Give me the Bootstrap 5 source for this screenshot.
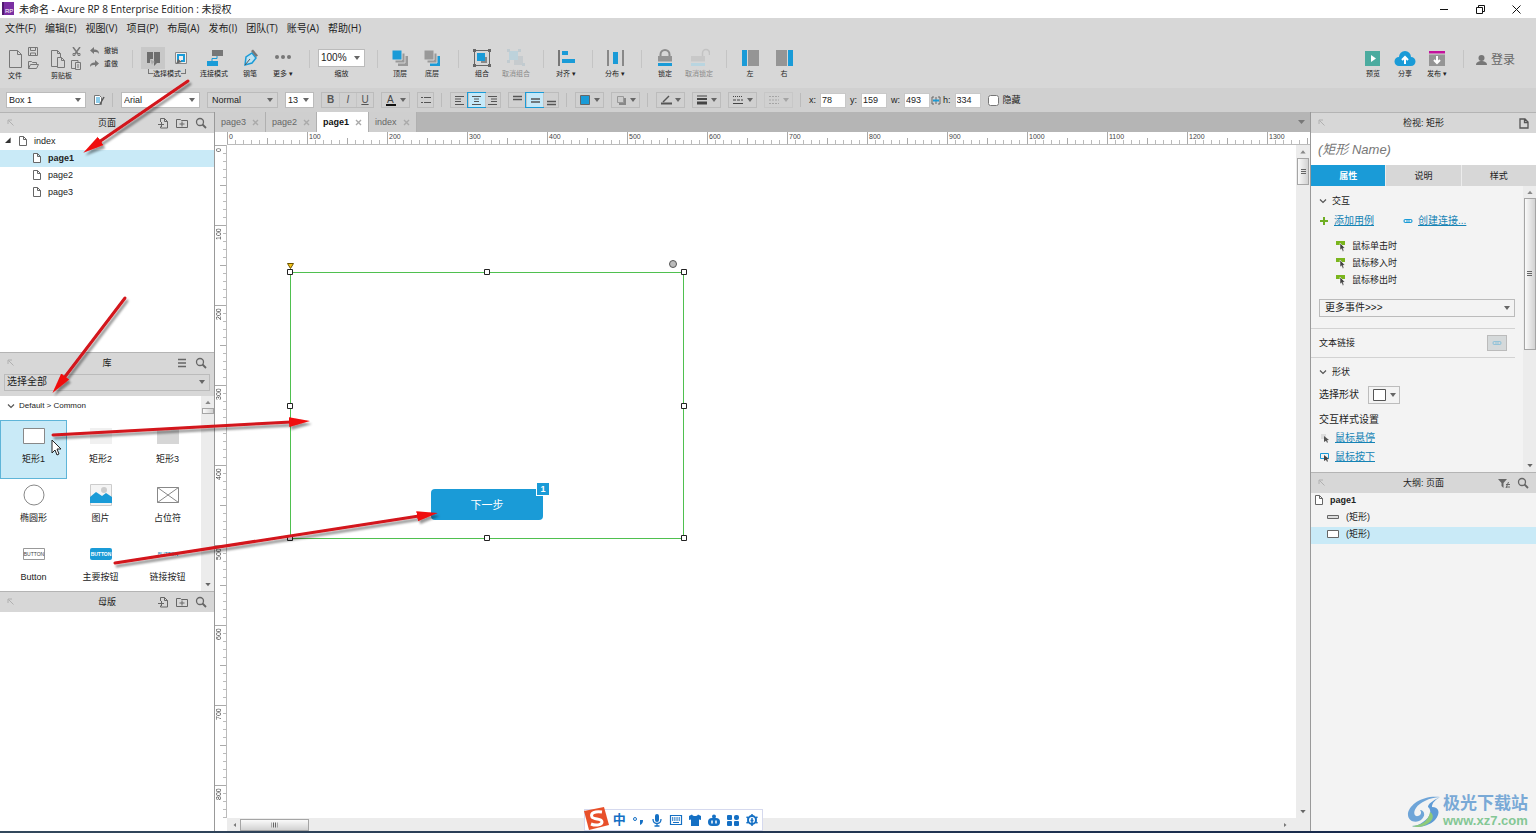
<!DOCTYPE html>
<html lang="zh-CN">
<head>
<meta charset="utf-8">
<meta name="viewport" content="width=device-width, initial-scale=1">
<title>未命名 - Axure RP 8 Enterprise Edition : 未授权</title>
<link href="https://cdn.jsdelivr.net/npm/bootstrap@5.3.0/dist/css/bootstrap.min.css" rel="stylesheet">
<style>
:root{--blue:#1a9bd7;--pale:#c9eaf7;--bar:#d7d7d7;--line:#bdbdbd;--tri:url("data:image/svg+xml,%3Csvg xmlns='http://www.w3.org/2000/svg' width='6' height='4'%3E%3Cpath d='M0 0h6L3 4z' fill='%23666'/%3E%3C/svg%3E")}
body{font-family:"Liberation Sans","Noto Sans CJK SC",sans-serif;font-size:9px;line-height:12px;color:#222;height:100vh;overflow:hidden;background:#fff}
button{background:none;border:0;padding:0;color:inherit;font:inherit}
svg{display:block;flex:none}
.titlebar{height:18px;font-family:"Open Sans","Noto Sans CJK SC",sans-serif;font-size:10px;padding-left:2px}
.winbtns{gap:27px;padding-right:15px}
.menubar{height:20px;background:var(--bar);font-family:"Open Sans","Noto Sans CJK SC",sans-serif;font-size:10px;gap:9px;padding-left:5px}
.menubar a{color:#222;text-decoration:none}
.toolbar{height:50px;background:var(--bar);padding:9px 21px 0 8px;font-size:7px;line-height:10px}
.tool{width:30px;display:flex;flex-direction:column;align-items:center;white-space:nowrap}
.tool-sm{width:28px}
.tool svg{width:22px;height:22px}
.off{color:#8a8a8a}
.tsep{width:1px;height:18px;background:#c4c4c4;margin:3px 8px 0 12px}
.filecol{width:31px}
.filecol svg{width:12px;height:12px}
.filecol svg.doc{width:16px;height:22px}
.undos{width:30px;line-height:8px;gap:5px}
.undos button{display:flex;gap:4px;white-space:nowrap}
.login{height:26px;font-size:12px;color:#666}
.modes{width:52px}
.pick{width:24px;height:22px;display:flex;align-items:center;justify-content:center}
.pick.on{background:#c8c8c8}
.brack{width:5px;height:5px;border:solid #777;border-width:0 0 1px 1px}
.brack.r{border-width:0 1px 1px 0}
.sel{appearance:none;border:1px solid #bbb;border-radius:0;background:#fff var(--tri) no-repeat right 4px center;font-size:9px;line-height:12px;padding:0 10px 0 2px;color:#222;height:16px}
.formatbar{height:24px;background:#d0d0d0;padding-left:6px;gap:7px}
.fsep{width:2px;height:14px;border-left:1px solid #bbb}
.grp{display:flex;border:1px solid #bcbcbc;height:16px}
.grp button{width:17px;display:flex;align-items:center;justify-content:center;font-size:10px;color:#555}
.grp button+button{border-left:1px solid #c4c4c4}
.grp button.on{background:#c5e9f9;outline:1px solid var(--blue)}
.drop{width:29px;height:16px;border:1px solid #bcbcbc;display:flex;align-items:center;padding-left:4px;background:var(--tri) no-repeat right 3px center}
.drop.off{opacity:.4}
.geo{gap:4px}
.geo input{width:26px;height:15px;border:1px solid #c8c8c8;padding:0 1px;font-size:9px;color:#222}
.work{flex:1 1 0;min-height:0}
.leftcol{width:215px;flex:none;display:grid;grid-template-rows:repeat(3,minmax(0,1fr));border-right:1px solid #999}
.rightcol{width:226px;flex:none;display:grid;grid-template-rows:repeat(2,minmax(0,1fr));border-left:1px solid #999;background:#f3f3f3}
.centercol{flex:1 1 0;min-width:0;display:flex;flex-direction:column}
.pane{display:flex;flex-direction:column;min-height:0;overflow:hidden}
.phead{height:21px;flex:none;display:grid;grid-template-columns:60px 1fr 60px;align-items:center;background:var(--bar);border-top:1px solid #b4b4b4;padding:0 7px}
.phead h2{font-size:9px;line-height:12px;margin:0;text-align:center;font-weight:400}
.phead div{display:flex;justify-content:flex-end;gap:7px}
.trow{height:17px;flex:none;display:flex;align-items:center;gap:6px;padding-bottom:2px}
.trow.on{background:var(--pale)}
.trow svg{width:10px;height:10px}
.vbar{width:13px;flex:none;background:#ececec;display:flex;flex-direction:column;align-items:center;color:#777}
.thumb{border:1px solid #a5a5a5;background:linear-gradient(90deg,#fafafa,#d2d2d2);display:flex;align-items:center;justify-content:center}
.grip{width:5px;height:6px;background:repeating-linear-gradient(#666 0 1px,transparent 1px 2px)}
.cells{display:grid;grid-template-columns:repeat(3,1fr);grid-auto-rows:59px}
.cell{display:flex;flex-direction:column;align-items:center;padding-top:2px;border:1px solid transparent;gap:2px}
.cell svg{width:24px;height:28px}
.cell.on{background:var(--pale);border-color:#5fb5d8}
.tabstrip{height:20px;flex:none;background:#b5b5b5;font-size:9px}
.ptab{height:20px;display:flex;align-items:center;gap:6px;padding:0 6px;background:#cfcfcf;border-right:1px solid #b0b0b0;color:#666}
.ptab.on{background:#fff;color:#111;font-weight:700}
.ptab svg{width:7px;height:7px}
.hruler{height:13px;flex:none;margin-left:12px;overflow:hidden;display:flex;font-size:7px;line-height:10px;color:#444;border-bottom:1px solid #bbb;background:repeating-linear-gradient(90deg,#aaa 0 1px,transparent 1px 80px) 0 0/100% 13px no-repeat,repeating-linear-gradient(90deg,#aaa 0 1px,transparent 1px 40px) 0 100%/100% 6px no-repeat,repeating-linear-gradient(90deg,#bbb 0 1px,transparent 1px 8px) 0 100%/100% 4px no-repeat}
.hruler span{flex:0 0 80px;padding-left:2px}
.vruler{width:12px;flex:none;overflow:hidden;display:flex;flex-direction:column;font-size:7px;line-height:8px;color:#444;border-right:1px solid #bbb;background:repeating-linear-gradient(#aaa 0 1px,transparent 1px 80px) 0 0/12px 100% no-repeat,repeating-linear-gradient(#aaa 0 1px,transparent 1px 40px) 100% 0/6px 100% no-repeat,repeating-linear-gradient(#bbb 0 1px,transparent 1px 8px) 100% 0/3px 100% no-repeat}
.vruler span{flex:0 0 80px;writing-mode:vertical-rl;transform:rotate(180deg);text-align:right;padding-bottom:3px;width:10px}
.boardrow{flex:1 1 0;min-height:0;display:flex}
.stage{flex:1 1 0;position:relative;overflow:hidden;min-width:0}
.shape{position:absolute;left:63px;top:127px;width:394px;height:267px;border:1px solid #4fc04f}
.nextbtn{position:absolute;left:204px;top:344px;width:112px;height:31px;background:var(--blue);color:#fff;border-radius:4px;font-size:11px}
.note{position:absolute;left:309px;top:337px;width:14px;height:14px;background:var(--blue);border:1px solid #fff;color:#fff;font-weight:700;text-align:center}
.marks{position:absolute;left:56px;top:114px;overflow:visible}
.hbar{height:13px;flex:none;margin-left:12px;background:#ececec;display:flex;align-items:center;padding:0 5px;color:#777}
.objname{height:32px;flex:none;background:#fff;border:0;border-radius:0;padding:0 7px;font-size:13px;font-style:italic;color:#777;width:100%}
.objname::placeholder{color:#777}
.itabs{display:grid;grid-template-columns:repeat(3,1fr);gap:1px;background:#ececec}
.itabs button{height:21px;background:var(--bar)}
.itabs button.on{background:var(--blue);color:#fff;font-weight:700}
.insp{flex:1;min-width:0;padding:6px 8px 0}
.insp .line{height:17px;display:flex;align-items:center;gap:5px}
.insp .ten,.insp a{font-size:10px}
.insp a{color:#1583b5;text-decoration:underline}
.rule{border-top:1px solid #d2d2d2;margin:0 0 0 -8px}
.linkbtn{width:20px;height:16px;border:1px solid #bbb;background:#d5d9da}
.ime{position:absolute;left:38%;bottom:2px;height:22px;background:#fff;border:1px solid #d5d9ee;padding:0 3px 0 28px;gap:5px}
.ime button svg{width:14px;height:14px}
.ime .slogo{position:absolute;left:-2px;bottom:-1px}
.wmark{position:absolute;right:8px;bottom:5px;gap:2px;font-family:"Noto Sans CJK SC",sans-serif}
.wmark b{display:block;font-size:17px;line-height:24px;color:#79a9d6;font-weight:700}
.wmark i{display:block;font:13px/14px "Liberation Sans",sans-serif;color:#84c795;font-weight:700}
.overlay{position:absolute;left:0;top:0;width:100%;height:100%;pointer-events:none}
.taskedge{height:2px;background:linear-gradient(90deg,#33485c,#14264a)}
</style>
</head>
<body class="d-flex flex-column position-relative">
<svg width="0" height="0" class="position-absolute" aria-hidden="true">
<defs>
<symbol id="page" viewBox="0 0 10 10"><path d="M1.5.5h4l3 3v6h-7zM5.5.5v3h3" fill="#fff" stroke="#666"/></symbol>
<symbol id="pin" viewBox="0 0 8 8"><path d="M1 5V1h4M1.500 1.500l5 5" fill="none" stroke="#b0b0b0"/></symbol>
<symbol id="find" viewBox="0 0 12 12"><circle cx="5" cy="5" r="3.500" fill="none" stroke="#666" stroke-width="1.300"/><path d="M7.500 7.500l3.500 3.500" stroke="#666" stroke-width="1.800"/></symbol>
<symbol id="addpage" viewBox="0 0 12 12"><path d="M3.500 5V1.500h4l3 3v6.500h-7V9.500M7.500 1.500v3h3M1 7.500h6M4.500 5v5" fill="none" stroke="#666"/></symbol>
<symbol id="addfold" viewBox="0 0 12 12"><path d="M.5 2.500h4l1 1h6v7H.5zM3.500 7h5M6 4.500v5" fill="none" stroke="#666"/></symbol>
<symbol id="xx" viewBox="0 0 7 7"><path d="M1 1l5 5M6 1L1 6" stroke="#aaa" stroke-width="1.400"/></symbol>
<symbol id="chev" viewBox="0 0 8 8"><path d="M1 2.500l3 3 3-3" fill="none" stroke="#555" stroke-width="1.200"/></symbol>
<symbol id="up" viewBox="0 0 6 8"><path d="M1 5.500h4L3 3z" fill="#888"/></symbol>
<symbol id="dn" viewBox="0 0 6 8"><path d="M1 2.500h4L3 5z" fill="#666"/></symbol>
<symbol id="case" viewBox="0 0 12 12"><path d="M1 1h9v4H1z" fill="#7ab51d"/><path d="M5 3l5 5-2 .3 1 2.700-1.300.5-1.200-2.700L5 10z" fill="#444" stroke="#fff" stroke-width=".5"/></symbol>
<symbol id="hov" viewBox="0 0 10 10"><path d="M1 1h5v5H1z" fill="#ddd"/><path d="M4 3l5 4-2 .3 1 2-1 .5-1-2L4 9z" fill="#555"/></symbol>
<symbol id="prs" viewBox="0 0 10 10"><path d="M.5 1.500h8v5h-8z" fill="none" stroke="#1a9bd7"/><path d="M4 3l5 4-2 .3 1 2-1 .5-1-2L4 9z" fill="#444"/></symbol>
<symbol id="chain" viewBox="0 0 10 8"><path d="M5 2.500H2.500a1.500 1.500 0 0 0 0 3H5M5 2.500h2.500a1.500 1.500 0 0 1 0 3H5M3 4h4" fill="none" stroke="#1a9bd7" stroke-width="1.200"/></symbol>
<symbol id="lock" viewBox="0 0 22 22"><path d="M6.500 9V7.500a4.500 4.500 0 0 1 9 0V9" fill="none" stroke="#8c8c8c" stroke-width="2"/><path d="M4 9h14v5.500H4z" fill="#949494"/><path d="M4 16h14v3H4z" fill="#1a9bd7"/></symbol>
</defs></svg>

<header>
<div class="titlebar d-flex align-items-center">
 <svg width="13" height="14" viewBox="0 0 13 14"><path d="M0 0h12v13H0z" fill="#7b2fa3"/><path d="M0 0h2v13H0z" fill="#501a70"/><text x="3" y="11" font-size="6" fill="#fff" font-family="Liberation Sans">RP</text></svg>
 <span class="ms-1">未命名 - Axure RP 8 Enterprise Edition : 未授权</span>
 <div class="winbtns d-flex ms-auto">
  <button aria-label="最小化"><svg width="9" height="9"><path d="M0 4.500h8" stroke="#111"/></svg></button>
  <button aria-label="还原"><svg width="9" height="9"><path d="M.5 2.500h6v6h-6zM2.500 2.500v-2h6v6h-2" fill="none" stroke="#111"/></svg></button>
  <button aria-label="关闭"><svg width="9" height="9"><path d="M.5.500l8 8M8.500.500l-8 8" stroke="#111"/></svg></button>
 </div>
</div>
<nav class="menubar d-flex align-items-center">
 <a href="#">文件(F)</a><a href="#">编辑(E)</a><a href="#">视图(V)</a><a href="#">项目(P)</a><a href="#">布局(A)</a><a href="#">发布(I)</a><a href="#">团队(T)</a><a href="#">账号(A)</a><a href="#">帮助(H)</a>
</nav>
<div class="toolbar d-flex align-items-start">
 <div class="filecol me-2">
  <div class="d-flex gap-1"><button aria-label="新建"><svg class="doc" viewBox="0 0 16 22"><path d="M1.500 2.500h8l4 4v13h-12zM9.500 2.500v4h4" fill="none" stroke="#777"/></svg></button>
  <div><button aria-label="保存" class="d-block"><svg viewBox="0 0 12 12"><path d="M.5 0.500h9v8h-9zM2.500.500v3h5v-3M2.500 8.500v-2.500h5v2.500" fill="none" stroke="#777"/></svg></button><button aria-label="打开" class="d-block"><svg viewBox="0 0 12 12"><path d="M.5 9.500v-7h3l1 1h4v2M.5 9.500l2-4h8l-2 4z" fill="none" stroke="#777"/></svg></button></div></div>
  文件</div>
 <div class="filecol me-2 ms-1">
  <div class="d-flex gap-1"><button aria-label="粘贴"><svg class="doc" viewBox="0 0 16 22"><path d="M6 18.500H.5v-16h6l3 3V9M6.500 2.500v3h3M6.500 9.500h4l3 3v7h-7zM10.500 9.500v3h3" fill="none" stroke="#777"/></svg></button>
  <div><button aria-label="剪切" class="d-block"><svg viewBox="0 0 12 12"><path d="M2 0l5 7M9 0L4 7" stroke="#777" stroke-width="1.500"/><path d="M2 6.500h2v2H2zM7 6.500h2v2H7z" fill="none" stroke="#777"/></svg></button><button aria-label="复制" class="d-block"><svg viewBox="0 0 12 12"><path d="M4 9.500H.500v-8H7V4M4.500 3.500h5v7h-5zM6 6h2M6 8h2" fill="none" stroke="#777"/></svg></button></div></div>
  剪贴板</div>
 <div class="undos d-flex flex-column">
  <button><svg width="10" height="8"><path d="M0 3.500L4 0v2.500c3 0 5 1 5 4.500-1-2-3-2-5-2V7z" fill="#777"/></svg>撤销</button>
  <button><svg width="10" height="8"><path d="M9 3.500L5 0v2.500C2 2.500 0 3.500 0 7c1-2 3-2 5-2V7z" fill="#777"/></svg>重做</button></div>
 <i class="tsep"></i>
 <div class="d-flex gap-1">
  <div class="modes"><div class="d-flex gap-1"><button class="pick on" aria-label="相交选择"><svg width="16" height="18"><path d="M2 3h6v7H5v4H2zM9 3h6v11h-3l-3 3z" fill="#6e6e6e"/><path d="M5 10l5 3-2 1-1 2z" fill="#aaa"/></svg></button><button class="pick" aria-label="包含选择"><svg width="14" height="16"><path d="M1.500 2.500h11v11h-11z" fill="#eee" stroke="#888"/><path d="M4 11V5h6v6H7" fill="none" stroke="#1a9bd7" stroke-width="2"/><path d="M2 14l2-5 4 3-2 .5z" fill="#666"/></svg></button></div>
   <div class="d-flex justify-content-center"><i class="brack"></i>选择模式<i class="brack r"></i></div></div>
  <button class="tool" style="width:34px"><svg viewBox="0 0 22 22"><path d="M9 3h11v6H9z" fill="#777"/><path d="M4 14h11v5H4z" fill="#1a9bd7"/><path d="M14 9v2.500H9V14" fill="none" stroke="#1a9bd7"/></svg>连接模式</button>
  <button class="tool"><svg viewBox="0 0 22 22"><path d="M6 18l1-8 6-4 4 5-4 5z" fill="#bfe2f1" stroke="#1a9bd7" stroke-width="1.500"/><path d="M12 4l2-1.500 5 6-2 1.500z" fill="#777"/><path d="M6 18l5-6" stroke="#555"/></svg>钢笔</button>
  <button class="tool tool-sm"><svg viewBox="0 0 22 22"><g fill="#777"><circle cx="5" cy="10" r="2"/><circle cx="11" cy="10" r="2"/><circle cx="17" cy="10" r="2"/></g></svg>更多 ▾</button>
 </div>
 <i class="tsep"></i>
 <div class="text-center" style="width:47px"><div style="height:22px" class="d-flex align-items-center"><select class="sel w-100" style="height:18px;font-size:10px" id="zoom" aria-label="缩放"><option>100%</option></select></div><label for="zoom" class="d-block">缩放</label></div>
 <i class="tsep"></i>
 <div class="d-flex gap-1">
  <button class="tool tool-sm"><svg viewBox="0 0 22 22"><path d="M9 9h10v10H9z" fill="#999"/><path d="M6 6h10v10H6z" fill="#999" stroke="#d7d7d7"/><path d="M3 3h10v10H3z" fill="#1a9bd7" stroke="#d7d7d7"/></svg>顶层</button>
  <button class="tool tool-sm"><svg viewBox="0 0 22 22"><path d="M9 9h10v10H9z" fill="#1a9bd7"/><path d="M6 6h10v10H6z" fill="#999" stroke="#d7d7d7"/><path d="M3 3h10v10H3z" fill="#999" stroke="#d7d7d7"/></svg>底层</button></div>
 <i class="tsep"></i>
 <div class="d-flex gap-1">
  <button class="tool"><svg viewBox="0 0 22 22"><path d="M3.500 3.500h15v15h-15z" fill="none" stroke="#666"/><path d="M2 2h3v3H2zM17 2h3v3h-3zM2 17h3v3H2zM17 17h3v3h-3z" fill="#666"/><path d="M10 10h6v6h-6z" fill="#888"/><path d="M6 6h8v8H6z" fill="#1a9bd7"/></svg>组合</button>
  <button class="tool off"><svg viewBox="0 0 22 22" opacity=".7"><path d="M9 9h9v9H9z" fill="#bfc7cb"/><path d="M4 4h9v9H4z" fill="#b3d0dd"/><path d="M2 2h3v3H2zM13 2h3v3h-3zM2 13h3v3H2zM17 16h3v3h-3z" fill="#b9c7ce"/></svg>取消组合</button></div>
 <i class="tsep"></i>
 <button class="tool tool-sm"><svg viewBox="0 0 22 22"><path d="M3 3h2v16H3z" fill="#777"/><path d="M7 4h6v4H7zM7 12h13v4H7z" fill="#1a9bd7"/></svg>对齐 ▾</button>
 <i class="tsep"></i>
 <button class="tool tool-sm"><svg viewBox="0 0 22 22"><path d="M3 3h2v16H3zM18 3h2v16h-2z" fill="#888"/><path d="M9 5h5v12H9z" fill="#1a9bd7"/></svg>分布 ▾</button>
 <i class="tsep"></i>
 <div class="d-flex gap-1"><button class="tool"><svg><use href="#lock"/></svg>锁定</button>
 <button class="tool off"><svg viewBox="0 0 22 22"><path d="M14.500 9V6a3.500 3.500 0 0 1 7 0v2" fill="none" stroke="#c3c3c3" stroke-width="1.500"/><path d="M3 9h14v5.500H3z" fill="#c8c8c8"/><path d="M3 16h14v3H3z" fill="#b9d5e0"/></svg>取消锁定</button></div>
 <i class="tsep"></i>
 <div class="d-flex gap-1"><button class="tool"><svg viewBox="0 0 22 22"><path d="M3 3h5v16H3z" fill="#1a9bd7"/><path d="M9 3h11v16H9z" fill="#959595"/></svg>左</button>
 <button class="tool"><svg viewBox="0 0 22 22"><path d="M3 3h11v16H3z" fill="#959595"/><path d="M15 3h5v16h-5z" fill="#1a9bd7"/></svg>右</button></div>
 <div class="d-flex gap-1 ms-auto">
  <button class="tool tool-sm"><svg viewBox="0 0 22 22"><path d="M3 4h15v15H3z" fill="#4bab9f"/><path d="M9 8l5 3.500L9 15z" fill="#fff"/></svg>预览</button>
  <button class="tool tool-sm"><svg viewBox="0 0 22 22"><path d="M5 19a4.500 4.500 0 0 1 0-9 6 6 0 0 1 12 0 4.500 4.500 0 0 1 0 9z" fill="#1a9bd7"/><path d="M11 17v-6M8 13l3-3 3 3" fill="none" stroke="#fff" stroke-width="2"/></svg>分享</button>
  <button class="tool tool-sm"><svg viewBox="0 0 22 22"><path d="M3 4h16v2.500H3z" fill="#c4129c"/><path d="M3 7.500h16V19H3z" fill="#959595"/><path d="M11 9v6M8 13l3 3 3-3" fill="none" stroke="#fff" stroke-width="2"/></svg>发布 ▾</button></div>
 <i class="tsep"></i>
 <button class="login d-flex align-items-center gap-1 ms-1"><svg width="11" height="12"><circle cx="5.500" cy="4" r="3" fill="#777"/><path d="M0 11c0-3 3-4 5.500-4s5.500 1 5.500 4z" fill="#777"/></svg>登录</button>
</div>
<div class="formatbar d-flex align-items-center">
 <select class="sel" style="width:80px" aria-label="样式"><option>Box 1</option></select>
 <button aria-label="编辑样式"><svg width="12" height="12"><path d="M1.500 1.500h5l2 2v7h-7z" fill="#fff" stroke="#777"/><path d="M3 4h4M3 6h4M3 8h4" stroke="#1a9bd7"/><path d="M11 3L7 10" stroke="#555" stroke-width="1.500"/></svg></button>
 <i class="fsep"></i>
 <select class="sel" style="width:79px" aria-label="字体"><option>Arial</option></select>
 <select class="sel" style="width:71px;background-color:#d4d4d4;padding-left:4px" aria-label="字形"><option>Normal</option></select>
 <select class="sel" style="width:29px" aria-label="字号"><option>13</option></select>
 <div class="grp"><button><b>B</b></button><button><i>I</i></button><button><u>U</u></button></div>
 <button class="drop" aria-label="文字颜色"><svg width="10" height="12"><text x="1" y="9" font-size="10" font-family="Liberation Sans" fill="#444">A</text><path d="M0 11h10" stroke="#111" stroke-width="2"/></svg></button>
 <div class="grp"><button style="width:15px" aria-label="项目符号"><svg width="10" height="9"><path d="M0 1.500h2M3 1.500h7M0 6.500h2M3 6.500h7" stroke="#555"/></svg></button></div>
 <i class="fsep"></i>
 <div class="grp"><button aria-label="左对齐"><svg width="10" height="11"><path d="M0 1.500h9M0 4h6M0 6.500h6M0 9.500h9" stroke="#555"/></svg></button><button class="on" aria-label="居中"><svg width="10" height="11"><path d="M0 1.500h9M2 4h5M2 6.500h5M0 9.500h9" stroke="#555"/></svg></button><button style="width:15px" aria-label="右对齐"><svg width="10" height="11"><path d="M0 1.500h9M3 4h6M3 6.500h6M0 9.500h9" stroke="#555"/></svg></button></div>
 <div class="grp"><button aria-label="顶部对齐"><svg width="9" height="11"><path d="M0 1.500h9M0 4.500h9" stroke="#555" stroke-width="1.300"/></svg></button><button class="on" aria-label="中部对齐"><svg width="9" height="11"><path d="M0 4h9M0 7h9" stroke="#555" stroke-width="1.300"/></svg></button><button style="width:15px" aria-label="底部对齐"><svg width="9" height="11"><path d="M0 6.500h9M0 9.500h9" stroke="#555" stroke-width="1.300"/></svg></button></div>
 <i class="fsep"></i>
 <button class="drop" aria-label="填充"><svg width="10" height="10"><path d="M.5.500h9v9h-9z" fill="#1a9bd7" stroke="#666"/></svg></button>
 <button class="drop" aria-label="阴影"><svg width="10" height="10"><path d="M3 3h7v7H3z" fill="#888"/><path d="M1.500 1.500h6v6h-6z" fill="#ccc" stroke="#999"/></svg></button>
 <i class="fsep"></i>
 <button class="drop" aria-label="线条颜色"><svg width="11" height="10"><path d="M2 7l6-6" stroke="#555" stroke-width="1.500"/><path d="M0 8.500h11" stroke="#555" stroke-width="2"/></svg></button>
 <button class="drop" aria-label="线宽"><svg width="11" height="10"><path d="M0 1h10" stroke="#444"/><path d="M0 4h10" stroke="#444" stroke-width="2"/><path d="M0 8h10" stroke="#444" stroke-width="3"/></svg></button>
 <button class="drop" aria-label="线型"><svg width="11" height="10"><path d="M0 1.500h10" stroke="#444" stroke-dasharray="1 1"/><path d="M0 5h10" stroke="#444" stroke-dasharray="3 1"/><path d="M0 8.500h10" stroke="#444"/></svg></button>
 <button class="drop off" aria-label="箭头样式"><svg width="11" height="10"><path d="M0 1.500h10M0 5h10M0 8.500h10" stroke="#666" stroke-dasharray="2 1"/></svg></button>
 <i class="fsep"></i>
 <div class="geo d-flex align-items-center"><label for="gx">x:</label><input id="gx" value="78"><label for="gy">y:</label><input id="gy" value="159"><label for="gw">w:</label><input id="gw" value="493"></div>
 <div class="geo d-flex align-items-center" style="margin-left:-6px"><svg width="10" height="9"><path d="M3 1H1v7h2M7 1h2v7H7M5 1v7" fill="none" stroke="#666"/><path d="M2 4.500h6" stroke="#1a9bd7" stroke-width="2"/></svg><label for="gh" style="margin-left:-2px">h:</label><input id="gh" value="334"></div>
 <div class="d-flex align-items-center"><input type="checkbox" id="hid" class="m-0 me-1" style="width:11px;height:11px"><label for="hid">隐藏</label></div>
</div>
</header>

<main class="work d-flex">
<aside class="leftcol">
 <section class="pane">
  <div class="phead"><svg width="8" height="8"><use href="#pin"/></svg><h2>页面</h2><div><button aria-label="添加页面"><svg width="12" height="12"><use href="#addpage"/></svg></button><button aria-label="添加文件夹"><svg width="12" height="12"><use href="#addfold"/></svg></button><button aria-label="搜索"><svg width="12" height="12"><use href="#find"/></svg></button></div></div>
  <div class="trow" style="padding-left:5px"><svg viewBox="0 0 10 10" style="width:7px"><path d="M0 8h8V0z" fill="#333"/></svg><svg><use href="#page"/></svg>index</div>
  <div class="trow on fw-bold" style="padding-left:32px"><svg><use href="#page"/></svg>page1</div>
  <div class="trow" style="padding-left:32px"><svg><use href="#page"/></svg>page2</div>
  <div class="trow" style="padding-left:32px"><svg><use href="#page"/></svg>page3</div>
 </section>
 <section class="pane">
  <div class="phead"><svg width="8" height="8"><use href="#pin"/></svg><h2>库</h2><div><button aria-label="选项"><svg width="12" height="12"><path d="M2 2.500h8M2 6h8M2 9.500h8" stroke="#666" stroke-width="1.300"/></svg></button><button aria-label="搜索"><svg width="12" height="12"><use href="#find"/></svg></button></div></div>
  <div style="background:var(--bar);padding:1px 4px 5px"><select class="sel d-block w-100" style="height:17px;font-size:10px;background-color:var(--bar)" aria-label="元件库"><option>选择全部</option></select></div>
  <div class="d-flex flex-fill" style="min-height:0">
   <div class="flex-fill overflow-hidden">
    <div class="d-flex align-items-center gap-1" style="height:24px;padding:0 0 4px 7px;font-size:8px"><svg width="8" height="8"><use href="#chev"/></svg>Default &gt; Common</div>
    <div class="cells">
     <div class="cell on"><svg viewBox="0 0 24 28"><path d="M1.500 5.500h21v15h-21z" fill="#fff" stroke="#888"/></svg>矩形1</div>
     <div class="cell"><svg viewBox="0 0 24 28"><path d="M1 5h22v16H1z" fill="#f0f0f0"/></svg>矩形2</div>
     <div class="cell"><svg viewBox="0 0 24 28"><path d="M1 5h22v16H1z" fill="#d6d6d6"/></svg>矩形3</div>
     <div class="cell"><svg viewBox="0 0 24 28"><circle cx="12" cy="13" r="10" fill="#fff" stroke="#888"/></svg>椭圆形</div>
     <div class="cell"><svg viewBox="0 0 24 28"><path d="M1.500 2.500h21v21h-21z" fill="#f4f4f4" stroke="#ccc"/><path d="M1 15l6-5 6 4 4-3 6 4v6H1z" fill="#1a9bd7"/><circle cx="15" cy="8" r="3" fill="#ccc"/></svg>图片</div>
     <div class="cell"><svg viewBox="0 0 24 28"><path d="M1.500 5.500h21v15h-21zL22.500 20.500M22.500 5.500l-21 15" fill="#fff" stroke="#888"/></svg>占位符</div>
     <div class="cell"><svg viewBox="0 0 24 28"><path d="M1.500 7.500h21v11h-21z" fill="#fff" stroke="#999"/><text x="12" y="15" font-size="5" text-anchor="middle" fill="#444">BUTTON</text></svg>Button</div>
     <div class="cell"><svg viewBox="0 0 24 28"><rect x="1" y="7" width="22" height="12" rx="2" fill="#1a9bd7"/><text x="12" y="15" font-size="5" font-weight="700" text-anchor="middle" fill="#fff">BUTTON</text></svg>主要按钮</div>
     <div class="cell"><svg viewBox="0 0 24 28"><text x="12" y="15" font-size="5" text-anchor="middle" fill="#1583b5">BUTTON</text></svg>链接按钮</div>
    </div>
   </div>
   <div class="vbar"><svg width="8" height="12"><use href="#up"/></svg><div class="thumb" style="width:12px;height:6px"></div><svg width="8" height="12" class="mt-auto"><use href="#dn"/></svg></div>
  </div>
 </section>
 <section class="pane">
  <div class="phead"><svg width="8" height="8"><use href="#pin"/></svg><h2>母版</h2><div><button aria-label="添加母版"><svg width="12" height="12"><use href="#addpage"/></svg></button><button aria-label="添加文件夹"><svg width="12" height="12"><use href="#addfold"/></svg></button><button aria-label="搜索"><svg width="12" height="12"><use href="#find"/></svg></button></div></div>
 </section>
</aside>

<section class="centercol">
 <div class="tabstrip d-flex align-items-center">
  <button class="ptab">page3<svg><use href="#xx"/></svg></button><button class="ptab">page2<svg><use href="#xx"/></svg></button><button class="ptab on">page1<svg><use href="#xx"/></svg></button><button class="ptab">index<svg><use href="#xx"/></svg></button>
  <svg width="8" height="8" class="ms-auto me-1"><path d="M0 2h7L3.500 6z" fill="#777"/></svg>
 </div>
 <div class="hruler"><span>0</span><span>100</span><span>200</span><span>300</span><span>400</span><span>500</span><span>600</span><span>700</span><span>800</span><span>900</span><span>1000</span><span>1100</span><span>1200</span><span>1300</span></div>
 <div class="boardrow">
  <div class="vruler"><span>0</span><span>100</span><span>200</span><span>300</span><span>400</span><span>500</span><span>600</span><span>700</span><span>800</span></div>
  <div class="stage">
   <div class="shape"></div>
   <button class="nextbtn">下一步</button>
   <span class="note">1</span>
   <svg class="marks" width="410" height="290"><g fill="#fff" stroke="#222"><path d="M4.500 10.500h5v5h-5zM201.500 10.500h5v5h-5zM398.500 10.500h5v5h-5zM4.500 144.500h5v5h-5zM398.500 144.500h5v5h-5zM4.500 276.500h5v5h-5zM201.500 276.500h5v5h-5zM398.500 276.500h5v5h-5z"/></g><path d="M4.500 4.500h6l-3 5z" fill="#f5c518" stroke="#6b5200"/><circle cx="390" cy="5" r="3.500" fill="#bbb" stroke="#555"/></svg>
  </div>
  <div class="vbar" style="width:14px"><svg width="8" height="13"><use href="#up"/></svg><div class="thumb" style="width:12px;height:27px"><i class="grip"></i></div><svg width="8" height="12" class="mt-auto"><use href="#dn"/></svg></div>
 </div>
 <div class="hbar"><svg width="8" height="8"><path d="M4 2v4L1.500 4z" fill="#777"/></svg><div class="thumb" style="width:69px;height:12px;background:linear-gradient(#fafafa,#d2d2d2)"><i class="grip" style="transform:rotate(90deg)"></i></div><svg width="8" height="8" class="ms-auto me-3"><path d="M3 2v4l2.500-2z" fill="#777"/></svg></div>
</section>

<aside class="rightcol">
 <section class="pane">
  <div class="phead"><svg width="8" height="8"><use href="#pin"/></svg><h2>检视: 矩形</h2><div><svg width="10" height="11" viewBox="0 0 10 11"><path d="M1 1h5l3 3v6H1zM5.500 1v3.500H9" fill="none" stroke="#555" stroke-width="1.300"/></svg></div></div>
  <input class="objname" placeholder="(矩形 Name)" aria-label="名称">
  <div class="itabs"><button class="on">属性</button><button>说明</button><button>样式</button></div>
  <div class="d-flex flex-fill" style="min-height:0">
   <div class="insp">
    <div class="line"><svg width="8" height="8"><use href="#chev"/></svg>交互</div>
    <div class="line" style="height:24px"><svg width="10" height="10"><path d="M5 1v8M1 5h8" stroke="#6fae23" stroke-width="2"/></svg><a href="#">添加用例</a><svg width="10" height="8" style="margin-left:24px"><use href="#chain"/></svg><a href="#">创建连接...</a></div>
    <div class="line ps-3 mt-1"><svg width="12" height="12"><use href="#case"/></svg>鼠标单击时</div>
    <div class="line ps-3"><svg width="12" height="12"><use href="#case"/></svg>鼠标移入时</div>
    <div class="line ps-3"><svg width="12" height="12"><use href="#case"/></svg>鼠标移出时</div>
    <select class="sel d-block ten" style="width:196px;height:18px;margin:11px 0;padding-left:5px;background-color:#f3f3f3" aria-label="更多事件"><option>更多事件&gt;&gt;&gt;</option></select>
    <div class="rule"></div>
    <div class="line justify-content-between pe-2" style="height:28px">文本链接<button class="linkbtn d-flex align-items-center justify-content-center" aria-label="文本链接"><svg width="10" height="8" opacity=".35"><use href="#chain"/></svg></button></div>
    <div class="rule"></div>
    <div class="line" style="height:27px"><svg width="8" height="8"><use href="#chev"/></svg>形状</div>
    <div class="line ten" style="height:20px;gap:9px">选择形状<button class="drop" style="width:32px;height:18px" aria-label="选择形状"><svg width="13" height="12"><path d="M.5.500h12v11h-12z" fill="#fff" stroke="#555"/></svg></button></div>
    <div class="line ten" style="height:24px;padding-top:6px">交互样式设置</div>
    <div class="line" style="height:18px;margin-left:1px"><svg width="10" height="10"><use href="#hov"/></svg><a href="#">鼠标悬停</a></div>
    <div class="line" style="height:20px;margin-left:1px"><svg width="10" height="10"><use href="#prs"/></svg><a href="#">鼠标按下</a></div>
   </div>
   <div class="vbar"><svg width="8" height="12"><use href="#up"/></svg><div class="thumb" style="width:12px;height:152px"><i class="grip"></i></div><svg width="8" height="12" class="mt-auto"><use href="#dn"/></svg></div>
  </div>
 </section>
 <section class="pane">
  <div class="phead"><svg width="8" height="8"><use href="#pin"/></svg><h2>大纲: 页面</h2><div><svg width="12" height="12"><path d="M0 2h9L5.500 6v5L3.500 9V6z" fill="#666"/><path d="M8 7.500h4M8 10h4M10.500 5L8 11" stroke="#666"/></svg><svg width="12" height="12"><use href="#find"/></svg></div></div>
  <div class="trow fw-bold" style="padding-left:3px"><svg><use href="#page"/></svg>page1</div>
  <div class="trow" style="padding-left:15px"><svg viewBox="0 0 14 10" style="width:14px"><path d="M1.500 3.500h11v3h-11z" fill="#ddd" stroke="#666"/></svg>(矩形)</div>
  <div class="trow on" style="padding-left:15px"><svg viewBox="0 0 14 10" style="width:14px"><path d="M1.500 1.500h11v7h-11z" fill="#fff" stroke="#666"/></svg>(矩形)</div>
 </section>
</aside>
</main>
<div class="taskedge"></div>

<div class="ime d-flex align-items-center">
 <svg class="slogo" width="27" height="25" viewBox="0 0 27 25"><path d="M1 5l20-4 5 18-20 5z" fill="#e8502a"/><path d="M19 6C12 5 7 7 9 11c2 3 10 1 10 5 0 3-6 4-11 2" fill="none" stroke="#fff" stroke-width="3"/></svg>
 <button style="color:#1570c4;font-weight:700;font-size:13px">中</button>
 <button aria-label="标点"><svg viewBox="0 0 14 14"><circle cx="4" cy="6" r="1.500" fill="none" stroke="#1570c4"/><path d="M9 7h3c0 3-1 4-3 5z" fill="#1570c4"/></svg></button>
 <button aria-label="语音"><svg viewBox="0 0 14 14"><rect x="5" y="1" width="4" height="8" rx="2" fill="#1570c4"/><path d="M3 6c0 6 8 6 8 0M7 10v3M4.500 13h5" fill="none" stroke="#1570c4" stroke-width="1.300"/></svg></button>
 <button aria-label="键盘"><svg viewBox="0 0 14 14"><path d="M1.500 2.500h11v9h-11z" fill="none" stroke="#1570c4" stroke-width="1.200"/><path d="M3 5h8M3 7h8" stroke="#1570c4" stroke-width="1.300" stroke-dasharray="1.300 .9"/><path d="M4 9.500h6" stroke="#1570c4"/></svg></button>
 <button aria-label="皮肤"><svg viewBox="0 0 14 14"><path d="M1 3l3-1.500c1 2 5 2 6 0L13 3v4l-2-.5V13H3V6.500L1 7z" fill="#1570c4"/></svg></button>
 <button aria-label="助手"><svg viewBox="0 0 14 14"><rect x="1" y="5" width="12" height="8" rx="4" fill="#1570c4"/><circle cx="7" cy="3.500" r="2" fill="#1570c4"/><path d="M5 7.500v3M9 7.500v3" stroke="#fff" stroke-width="1.500"/></svg></button>
 <button aria-label="工具箱"><svg viewBox="0 0 14 14"><g fill="#1570c4"><rect x="1" y="2" width="5" height="5" rx="1"/><rect x="8" y="2" width="5" height="5" rx="2"/><rect x="1" y="8" width="5" height="5" rx="1"/><rect x="8" y="8" width="5" height="5" rx="1"/></g></svg></button>
 <button aria-label="设置"><svg viewBox="0 0 14 14"><circle cx="7" cy="7" r="4" fill="none" stroke="#1570c4" stroke-width="2"/><path d="M7 1v2M7 11v2M1.500 4l2 1M10.500 9l2 1M1.500 10l2-1M10.500 5l2-1M7 5v5M5.500 7.500h3" stroke="#1570c4" stroke-width="1.500"/></svg></button>
</div>
<div class="wmark d-flex align-items-end">
 <svg width="34" height="32" viewBox="0 0 34 32"><path d="M33 1C16-1 3 8 1 17c-1 9 9 11 14 6 4-4 2-9-2-9 2 2 1 6-2 6-4 1-5-4-2-8C13 6 22 2 33 1z" fill="#6fa5d8"/><path d="M33 1C25 5 21 8 21 11c4 3 3 10-5 15-4 3-8 4-11 4 5 2 16 1 23-6 6-7 4-13-3-13 0-4 3-7 8-10z" fill="#5e9bd6"/><path d="M5 30c8 0 17-5 18-14 5 3 3 9-3 12-4 3-10 4-15 2z" fill="#8fca79"/></svg>
 <div><b>极光下载站</b><i class="fst-normal">www.xz7.com</i></div>
</div>
<svg class="overlay" aria-hidden="true">
 <defs><filter id="sh" x="-10%" y="-20%" width="120%" height="150%"><feDropShadow dx="2" dy="3" stdDeviation="1" flood-color="#000" flood-opacity=".4"/></filter>
 <marker id="head" markerUnits="userSpaceOnUse" markerWidth="24" markerHeight="12" refX="2" refY="6" orient="auto"><path d="M0 1l21 5-21 5z" fill="#f00a0a"/></marker></defs>
 <g stroke="#d3141b" stroke-width="3" stroke-linecap="round" filter="url(#sh)">
  <path d="M188 81L99 142" marker-end="url(#head)"/><path d="M125 298L64 378" marker-end="url(#head)"/><path d="M53 435L291 422" marker-end="url(#head)"/><path d="M115 563L419 516" marker-end="url(#head)"/></g>
 <path d="M52 440v13l3-3 2 5 2-1-2-5h4z" fill="#fff" stroke="#222"/>
</svg>
<script src="https://cdn.jsdelivr.net/npm/bootstrap@5.3.0/dist/js/bootstrap.bundle.min.js"></script>
</body>
</html>
